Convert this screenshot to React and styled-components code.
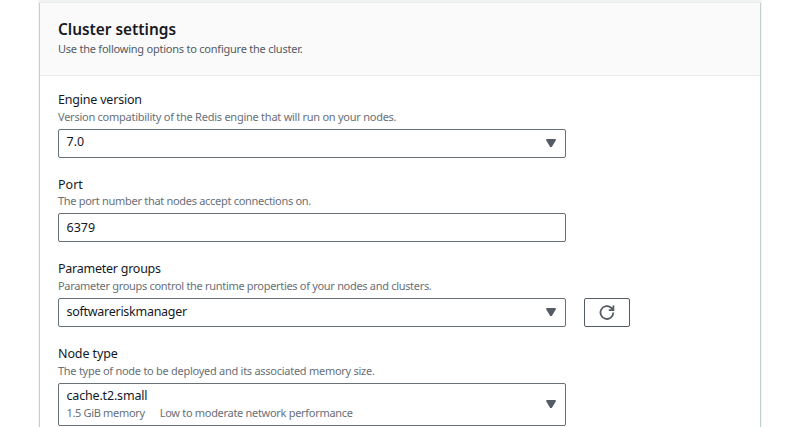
import React from "react";
import styled, { createGlobalStyle } from "styled-components";

const Global = createGlobalStyle`
  * { box-sizing: border-box; }
  html, body { margin: 0; background: #fff; overflow: hidden; }
  body { font-family: "Noto Sans", "Open Sans", sans-serif; color: #16191f; }
`;
const Page = styled.main`
  height: 427px;
  overflow: hidden;
  padding: 2px 40px 0;
`;
const Panel = styled.section`
  width: 720px;
  height: 440px;
  background: #fff;
  border-top: 1px solid #eaeded;
  box-shadow: 1px 1px 0 0 #c8cfcf, -1px 1px 0 0 #c8cfcf, 0 0 0 2px #f2f3f3;
`;
const Header = styled.header`
  height: 73px;
  padding: 16px 18px 0;
  background: #fafafa;
  border-bottom: 1px solid #eaeded;
`;
const Title = styled.h2`
  margin: 0 0 -1px;
  font-size: 15.4px;
  font-weight: 600;
  line-height: 22px;
`;
const Text = styled.span`
  display: block;
  white-space: nowrap;
  letter-spacing: ${(p) => p.$track || 0}px;
`;
const Hint = styled(Text)`
  color: #687078;
  font-size: 11px;
  line-height: 17px;
`;
const HeaderHint = styled(Hint)`
  color: #545b64;
`;
const Form = styled.div`
  padding: 15px 18px 0;
`;
const Field = styled.div`
  height: ${(p) => (p.$compact ? 84 : 85)}px;
`;
const Label = styled(Text)`
  font-size: 12.5px;
  line-height: 18px;
`;
const FieldHint = styled(Hint)`
  margin-top: ${(p) => (p.$compact ? -2 : -1)}px;
`;
const Row = styled.div`
  display: flex;
  gap: 18px;
  margin-top: 4px;
`;
const Control = styled.div`
  display: flex;
  align-items: center;
  justify-content: space-between;
  width: 508px;
  height: ${(p) => (p.$tall ? 43 : 29)}px;
  padding: 0 9px 0 7.5px;
  border: 1px solid #687078;
  border-radius: 2px;
`;
const Value = styled(Label)`
  padding-top: ${(p) => p.$drop || 0}px;
  padding-bottom: ${(p) => p.$raise || 0}px;
`;
const Option = styled.div`
  padding-bottom: 1px;
`;
const Details = styled.div`
  display: flex;
  gap: 15px;
  margin-top: -1px;
`;
const Refresh = styled.button`
  display: grid;
  place-items: center;
  width: 46px;
  height: 29px;
  padding: 0;
  background: #fff;
  border: 1px solid #545b64;
  border-radius: 2px;
`;
const CaretIcon = styled.svg`
  width: 10px;
  height: 8px;
  margin-bottom: 1px;
`;
const Caret = () => (
  <CaretIcon viewBox="0 0 10 8"><path d="M.3 0h9.4v1.5L5.8 8H4.2L.3 1.5z" fill="#545b64" /></CaretIcon>
);
const RefreshIcon = () => (
  <svg width="16" height="15" viewBox="0 0 16 15" fill="none" stroke="#545b64" strokeWidth="1.8">
    <path d="M14.3 7.6A6.4 6.4 0 1 1 12.4 3L14.4 5" />
    <path d="M9.8 5.2H14.4V.4" />
  </svg>
);

export default function App() {
  return (
    <Page>
      <Global />
      <Panel>
        <Header>
          <Title>Cluster settings</Title>
          <HeaderHint $track={-0.23}>Use the following options to configure the cluster.</HeaderHint>
        </Header>
        <Form>
          <Field>
            <Label $track={-0.2}>Engine version</Label>
            <FieldHint $track={-0.25}>Version compatibility of the Redis engine that will run on your nodes.</FieldHint>
            <Row><Control><Value $raise={3}>7.0</Value><Caret /></Control></Row>
          </Field>
          <Field $compact>
            <Label>Port</Label>
            <FieldHint $compact $track={-0.3}>The port number that nodes accept connections on.</FieldHint>
            <Row><Control><Value $drop={1}>6379</Value></Control></Row>
          </Field>
          <Field>
            <Label $track={-0.25}>Parameter groups</Label>
            <FieldHint $track={-0.31}>Parameter groups control the runtime properties of your nodes and clusters.</FieldHint>
            <Row>
              <Control><Value $raise={2} $track={-0.27}>softwareriskmanager</Value><Caret /></Control>
              <Refresh aria-label="Refresh"><RefreshIcon /></Refresh>
            </Row>
          </Field>
          <Field>
            <Label $track={-0.1}>Node type</Label>
            <FieldHint $track={-0.27}>The type of node to be deployed and its associated memory size.</FieldHint>
            <Row>
              <Control $tall>
                <Option>
                  <Value $track={-0.17}>cache.t2.small</Value>
                  <Details>
                    <Hint $track={-0.33}>1.5 GiB memory</Hint>
                    <Hint $track={-0.3}>Low to moderate network performance</Hint>
                  </Details>
                </Option>
                <Caret />
              </Control>
            </Row>
          </Field>
        </Form>
      </Panel>
    </Page>
  );
}
